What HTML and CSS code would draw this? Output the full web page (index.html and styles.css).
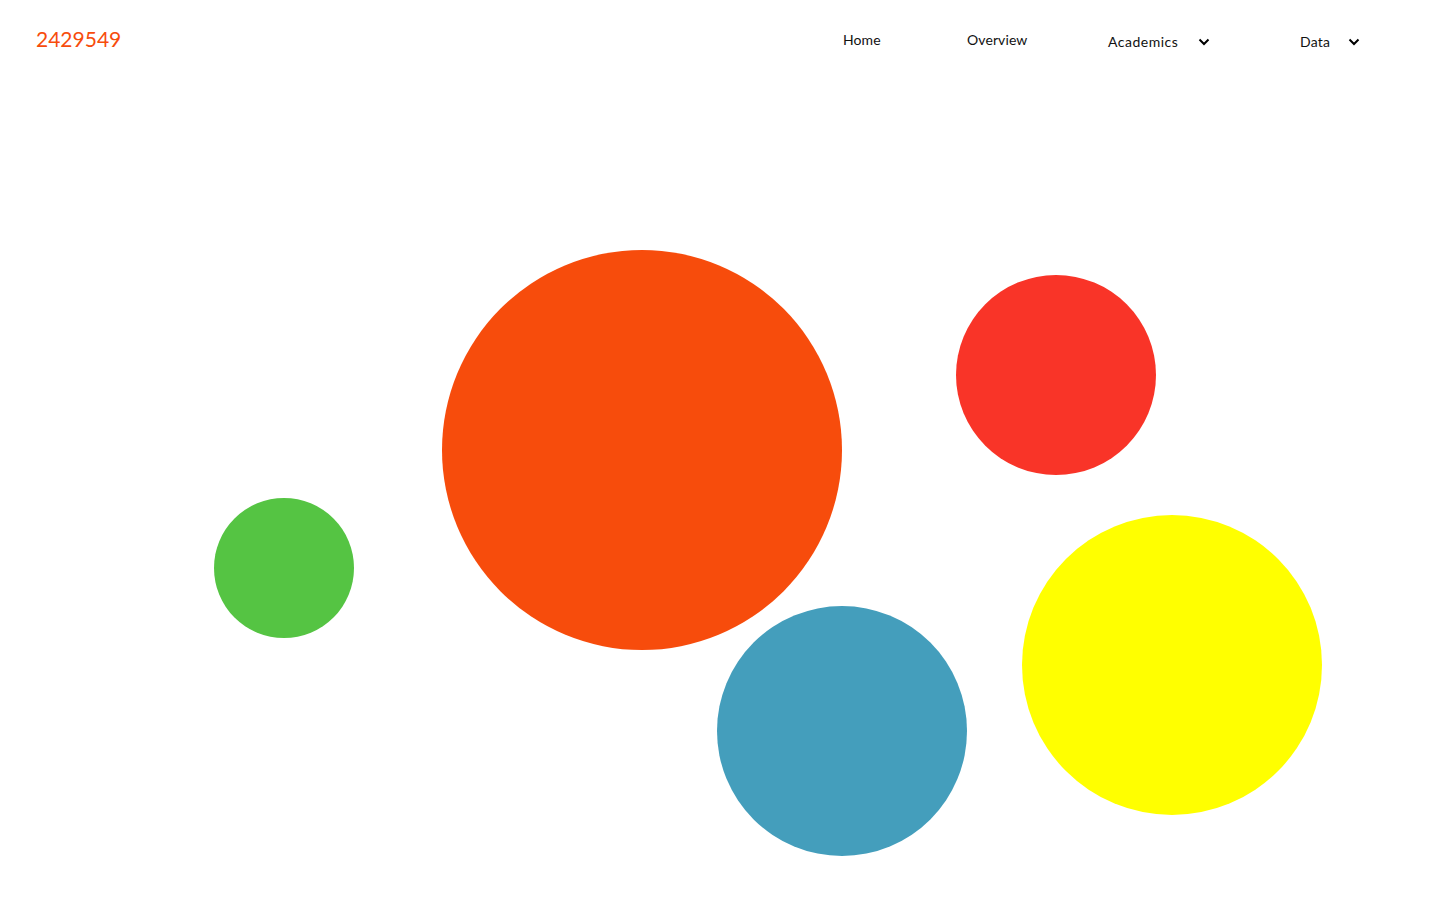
FILE: index.html
```html
<!DOCTYPE html>
<html lang="en">
<head>
<meta charset="utf-8">
<title>2429549</title>
<link rel="stylesheet" href="styles.css">
</head>
<body>
<header class="topbar">
  <a class="brand" href="#">2429549</a>
  <nav class="nav">
    <a class="nav-item home" href="#">Home</a>
    <a class="nav-item overview" href="#">Overview</a>
    <a class="nav-item dd academics" href="#"><span>Academics</span>
      <svg class="chev" viewBox="0 0 12 8" width="12" height="8"><path d="M1.5 1.5 L6 6 L10.5 1.5" fill="none" stroke="#000" stroke-width="2"/></svg></a>
    <a class="nav-item dd data" href="#"><span>Data</span>
      <svg class="chev" viewBox="0 0 12 8" width="12" height="8"><path d="M1.5 1.5 L6 6 L10.5 1.5" fill="none" stroke="#000" stroke-width="2"/></svg></a>
  </nav>
</header>
<main class="canvas">
  <div class="bubble green"></div>
  <div class="bubble orange"></div>
  <div class="bubble red"></div>
  <div class="bubble blue"></div>
  <div class="bubble yellow"></div>
</main>
</body>
</html>
```
FILE: styles.css
```css
html, body {
  margin: 0;
  padding: 0;
  background: #fff;
  font-family: Lato, "Noto Sans", sans-serif;
}
.topbar {
  height: 80px;
  display: flex;
  align-items: flex-start;
  justify-content: space-between;
  padding: 0 0 0 36px;
}
.brand {
  margin-top: 26px;
  font-size: 21px;
  color: #F74C0C;
  text-decoration: none;
}
.nav {
  display: flex;
  align-items: flex-start;
  margin-top: 31px;
  margin-right: 80px;
}
.nav-item {
  color: #111;
  text-decoration: none;
  font-size: 14px;
  display: flex;
  align-items: center;
  flex: none;
}
.home { width: 124px; letter-spacing: 0.1px; }
.overview { width: 141px; letter-spacing: 0.1px; }
.academics { width: 192px; margin-top: 2px; }
.academics span { width: 90px; letter-spacing: 0.5px; }
.data { margin-top: 2px; }
.data span { width: 48px; letter-spacing: 0.2px; }
.chev { margin-top: 1px; }
.canvas {
  position: relative;
  height: 820px;
}
.bubble {
  position: absolute;
  border-radius: 50%;
}
.orange { left: 442px; top: 170px; width: 400px; height: 400px; background: #F74C0C; }
.red    { left: 956px; top: 195px; width: 200px; height: 200px; background: #F93428; }
.green  { left: 214px; top: 418px; width: 140px; height: 140px; background: #55C443; }
.blue   { left: 717px; top: 526px; width: 250px; height: 250px; background: #449EBC; }
.yellow { left: 1022px; top: 435px; width: 300px; height: 300px; background: #FFFF00; }
```
